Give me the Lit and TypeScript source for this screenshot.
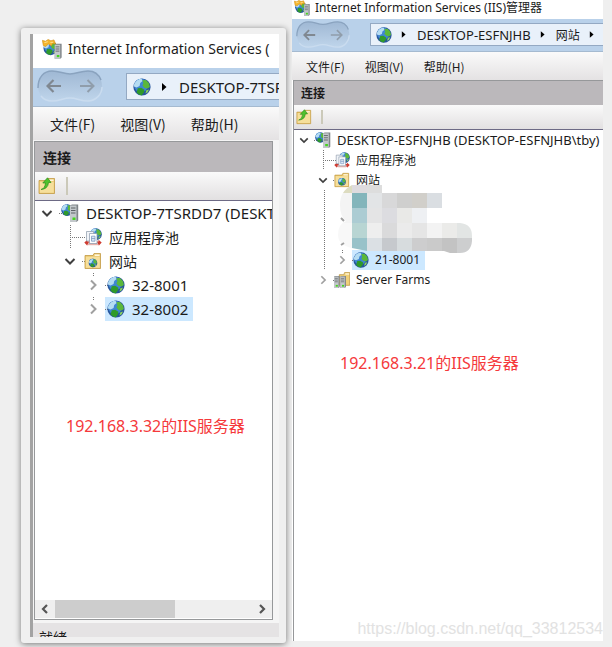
import { LitElement, html, svg, css, nothing } from "lit";
import { customElement, property } from "lit/decorators.js";
import { classMap } from "lit/directives/class-map.js";

type IconName = "server" | "globe" | "pool" | "sites" | "farm" | "connect" | "app" | "none";

interface TreeRow {
  level: number;
  icon: IconName;
  label: string;
  toggle?: "open" | "closed";
  cjk?: boolean;
  host?: boolean;
  selected?: boolean;
  guide?: boolean;
  dots?: boolean;
}

const globe = svg`
  <circle cx="9" cy="9" r="8.6" fill="#27559c"/>
  <circle cx="8" cy="7.500" r="6.800" fill="#3f86d2"/>
  <path d="M1.500 5.500Q4 .8 8.600 .8L9.600 3 7.200 5 6.600 8 3.600 9.400 1 8.400Q.8 6.500 1.500 5.500Z" fill="#b5dcf2"/>
  <path d="M9.400 2.200 13 2l3 3.200.9 3.800-2.300 1.600-3-.7-2.200-2.400 1-2.200Z" fill="#5bb83a"/>
  <path d="M4.800 10.200 8.200 9.800l3.200 2-.5 2.800-2.400 2.800Q5.600 17 3.600 14.600Z" fill="#2f9a2a"/>
  <path d="M13.400 12.200l2.600-.8-1.600 3.200-2 .8Z" fill="#8fd65c"/>`;

const folder = svg`
  <path d="M1 3.500h8l1-2h6.500v15H1Z" fill="#e8c468" stroke="#c39b45" stroke-width=".8"/>
  <path d="M1.800 4.600h14v11.200h-14Z" fill="#f6df9b"/>
  <path d="M10.600 2.400h5v1.600h-5Z" fill="#fff7da"/>`;

const tower = svg`
  <path d="M9 1.500 11 .5h6.200v16L15.500 18H9Z" fill="#7f8488"/>
  <path d="M9 1.500h6.500V18H9Z" fill="#c3c8cb"/>
  <path d="M10 4h4.500M10 6.500h4.500M10 9h4.500" stroke="#5d6265" stroke-width="1"/>
  <rect x="11.500" y="13.500" width="3" height="2.500" fill="#44d51d"/>`;

const icons: Record<IconName, unknown> = {
  none: nothing,
  globe,
  server: svg`<g transform="translate(0 0) scale(.68)">${globe}</g>${tower}`,
  app: svg`<g transform="translate(1 1.500) scale(.74)">${globe}</g>
    <path d="M.3 1.200 3.200 2 5.500.4 8 1.600 10.800.8 12.300 4.600 9.600 4 8.400 6.200 5.800 4.400 3.400 6.800 1.200 6Z" fill="#f5b52c" stroke="#cf8b16" stroke-width=".5"/>
    <path d="M2.200 3.200 5.200 2.500M7.500 3h2.500" stroke="#fde7a0" stroke-width=".8"/>
    <g transform="translate(4.600 4) scale(.76 .77)">${tower}</g>`,
  pool: svg`<g transform="translate(5.500 0) scale(.7)">${globe}</g>
    <path d="M.3 14.500 3.500 11.800v1.700h2v3h-2.200v1.200ZM17.700 14.500 14.500 11.800v1.700h-2v3h2.200v1.200Z" fill="#cf3b30"/>
    <path d="M4 14.600h10v2.600H4Z" fill="#e5b3ae"/>
    <path d="M2.500 3.500h7v9.500h-7Z" fill="#f1f4f8" stroke="#8b98a8" stroke-width=".7"/>
    <path d="M5.500 5.500h7.500v10H5.500Z" fill="#fff" stroke="#8796aa" stroke-width=".7"/>
    <path d="M7.500 8.200h3.500v5H7.500ZM7.500 10.500h3.500" fill="#dbe7f5" stroke="#7f9cc4" stroke-width=".8"/>`,
  sites: svg`${folder}<g transform="translate(4.500 6.500) scale(.5)">${globe}</g>`,
  farm: svg`<path d="M6 3h5l1-2.500h5.700V15H6Z" fill="#efd07a" stroke="#b98f38" stroke-width=".8"/>
    <path d="M12.800 1.500h4.200v1.500h-4.200Z" fill="#fff7da"/>
    <g transform="translate(-7 4) scale(.78)">${tower}</g>
    <g transform="translate(0 4) scale(.78)">${tower}</g>`,
  connect: svg`${folder}
    <path d="M3 12.500Q7 11.500 7.500 6H4.800L9.500.8 13 5.500h-2.500Q10 12 3 12.500Z" fill="#4fc22c" stroke="#2c8d1c" stroke-width=".7"/>`,
};

const icon = (name: IconName) =>
  html`<svg class="icon" viewBox="0 0 18 18" aria-hidden="true">${icons[name]}</svg>`;

const arrow = html`<svg class="crumb-arrow" viewBox="0 0 6 8" aria-hidden="true">
  <path d="M1 0 5.500 4 1 8Z" fill="#000" /></svg>`;

const chevron = (open: boolean) => html`<svg class="chevron" viewBox="0 0 12 12" aria-hidden="true">
  <path d=${open ? "M1.500 4 6 8.500 10.500 4" : "M4 1.500 8.500 6 4 10.500"} fill="none"
    stroke=${open ? "#404040" : "#a0a0a0"} stroke-width="2" /></svg>`;

const mosaicRows: [number, number, string[]][] = [
  [8, 15, ["#83b5bb", "#e2e4e6", "#d8d8d9", "#cfcfce", "#d1cfca", "#dadee2"]],
  [23, 15, ["#acccd3", "#e4e4e5", "#dcdce0", "#e9e9e7", "#eef0f3"]],
  [38, 15, ["#b8d5d3", "#eeeeee", "#dadadb", "#ebebeb", "#e5e5e5", "#f3f3f3", "#ebebe9", "#e2e5e4"]],
  [53, 15, ["#98c2c9", "#dbe0e4", "#c6c9cd", "#d7dcde", "#cdcdce", "#cacaca", "#c3c3c3", "#cdcecf"]],
];

const mosaic = html`<svg class="mosaic" viewBox="0 0 134 68" aria-hidden="true">
  <defs><clipPath id="brush">
    <path d="M14 0H44V8H104V23H89V38H122Q134 39 134 51V56Q133 68 122 68H112L106 66H29L14 63Q0 60 0 50 0 39 8 36 2 31 2 20 2 6 14 0Z" />
  </clipPath></defs>
  <g clip-path="url(#brush)">
    <rect x="0" y="8" width="14" height="30" fill="#f4f4f4" />
    <rect x="0" y="38" width="14" height="28" fill="#f8f8f8" />
    <rect x="2" y="0" width="12" height="8" fill="#dddcc0" />
    <rect x="14" y="0" width="15" height="8" fill="#dedbde" />
    <rect x="29" y="0" width="15" height="8" fill="#dddddd" />
    ${mosaicRows.map(([y, h, colors]) =>
      colors.map((c, i) => svg`<rect x=${14 + i * 15} y=${y} width="15" height=${h} fill=${c}/>`))}
  </g>
  <path d="M3 33l3 3M3 60l3-2" stroke="#a0a0a0" stroke-width="2" />
</svg>`;

@customElement("iis-window")
export class IisWindow extends LitElement {
  @property({ attribute: false }) caption: unknown = "";
  @property({ attribute: false }) crumbs: string[] = [];
  @property({ attribute: false }) rows: TreeRow[] = [];
  @property({ attribute: false }) note: unknown = "";
  @property({ type: Boolean }) footer = false;
  @property({ type: Boolean }) masked = false;
  @property({ type: Boolean }) trailing = false;

  static styles = css`
    :host {
      --text: 14px;
      --latin: 15px;
      --host: 15px;
      --icon: 18px;
      --indent: 23px;
      --cell: 24px;
      --row: 24px;
      display: flex;
      flex-direction: column;
      min-width: 0;
      overflow: hidden;
      background: #f5f5f5;
      color: #1b1b1b;
      font-family: "Noto Sans", "Noto Sans CJK SC", sans-serif;
      font-size: var(--latin);
    }
    :host([compact]) {
      --text: 12px;
      --latin: 12px;
      --host: 13px;
      --icon: 16px;
      --indent: 19px;
      --cell: 20px;
      --row: 20px;
    }
    * { box-sizing: border-box; }
    button {
      border: 0;
      padding: 0;
      background: none;
      color: inherit;
      font: inherit;
      white-space: nowrap;
    }
    .icon { width: var(--icon); height: var(--icon); flex: none; display: block; }
    .cjk { font-family: "Noto Sans CJK SC", sans-serif; font-size: var(--text); }
    .host { font-size: var(--host); }
    .title {
      display: flex;
      align-items: center;
      gap: 6px;
      height: 34px;
      padding: 0 0 4px 9px;
      background: #fff;
      white-space: nowrap;
      overflow: hidden;
      flex: none;
    }
    .title .icon { width: 20px; height: 20px; }
    .title-text { font-size: 14px; line-height: 24px; }
    :host([compact]) .title { height: 19px; padding: 0 0 4px 2px; gap: 5px; }
    :host([compact]) .title .icon { width: 16px; height: 16px; }
    :host([compact]) .title-text { font-size: 12px; line-height: 16px; }

    .address {
      display: flex;
      height: 39px;
      padding: 2px 0 0 4px;
      gap: 23px;
      background: #b9d1ea;
      border-bottom: 1px solid #a5bad0;
      flex: none;
    }
    .nav { position: relative; display: flex; width: 66px; height: 32px; flex: none; }
    .nav-shape { position: absolute; inset: 0; width: 100%; height: 100%; }
    .nav button { position: relative; flex: 1; display: grid; place-items: center; }
    .nav-arrow { width: 16px; height: 14px; }
    .path {
      display: flex;
      align-items: center;
      flex: 1;
      min-width: 0;
      height: 27px;
      margin-top: 3px;
      padding-left: 6px;
      background: #e9f1fa;
      border: 1px solid #94a9c3;
      border-right: 0;
      overflow: hidden;
      white-space: nowrap;
    }
    .crumb-arrow { width: 6px; height: 8px; flex: none; margin: 0 12px 0 10px; }
    :host([compact]) .address { height: 33px; gap: 20px; }
    :host([compact]) .nav { width: 54px; height: 27px; }
    :host([compact]) .nav-arrow { width: 13px; height: 12px; }
    :host([compact]) .path { height: 23px; margin-top: 2px; padding-left: 5px; }
    :host([compact]) .crumb-arrow { width: 5px; height: 7px; margin: 0 11px 0 9px; }

    .menu {
      display: flex;
      gap: 25px;
      height: 33px;
      padding-left: 17px;
      background: linear-gradient(#fafafa, #e4e2e3);
      flex: none;
    }
    :host([compact]) .menu { gap: 20px; height: 28px; padding-left: 14px; }

    .panel {
      display: flex;
      flex-direction: column;
      flex: 1;
      margin: 1px 6px 3px 1px;
      border: 1px solid #96989a;
      background: #fff;
      min-width: 0;
      overflow: hidden;
    }
    :host([compact]) .panel { margin: 0 0 0 1px; border-right: 0; border-bottom: 0; }
    .heading {
      margin: 0;
      height: 30px;
      padding-left: 8px;
      line-height: 30px;
      background: #bbb8bb;
      font-weight: 700;
      flex: none;
    }
    .tools {
      display: flex;
      align-items: center;
      gap: 10px;
      height: 29px;
      padding-left: 3px;
      background: linear-gradient(#fafafa, #e2e0e1);
      border-bottom: 1px solid #6d6a85;
      flex: none;
    }
    .divider { width: 2px; height: 18px; background: #cbc9b9; }
    :host([compact]) .heading { height: 24px; line-height: 24px; padding-left: 7px; }
    :host([compact]) .tools { height: 25px; padding-left: 2px; gap: 9px; }
    :host([compact]) .divider { height: 14px; }

    .tree { position: relative; margin: 0; padding: 0; list-style: none; flex: none; }
    .row { display: flex; height: var(--row); white-space: nowrap; }
    .guide { width: var(--indent); flex: none; }
    .guide.line {
      background: repeating-linear-gradient(#777 0 1px, transparent 1px 2px) 11px 0 / 1px 100% no-repeat;
    }
    .cell { width: var(--cell); flex: none; display: grid; place-items: center; }
    .cell.leaf {
      background:
        repeating-linear-gradient(#777 0 1px, transparent 1px 2px) center 0 / 1px 100% no-repeat,
        repeating-linear-gradient(90deg, #777 0 1px, transparent 1px 2px) right center / 50% 1px no-repeat;
    }
    .cell.dots {
      background: repeating-linear-gradient(#777 0 1px, transparent 1px 2px) center 0 / 1px 4px no-repeat;
    }
    .chevron { width: 12px; height: 12px; display: block; }
    .label {
      display: flex;
      align-items: center;
      gap: 7px;
      padding: 0 5px 0 2px;
      line-height: var(--row);
      background: repeating-linear-gradient(90deg, #777 0 1px, transparent 1px 2px) 0 center / 3px 1px no-repeat;
    }
    .label.selected { background-color: #cce8ff; }
    :host([compact]) .chevron { width: 10px; height: 10px; }
    :host([compact]) .label { gap: 6px; padding: 0 5px 0 1px; }

    .mosaic { position: absolute; left: 44px; top: 55px; width: 134px; height: 68px; }
    .note {
      margin: 93px 0 0 31px;
      font-size: 16px;
      line-height: 24px;
      color: #f5393b;
      white-space: nowrap;
    }
    :host([compact]) .note { margin: 61px 0 0 46px; }

    .scroll {
      display: flex;
      align-items: center;
      height: 18px;
      margin-top: auto;
      margin-bottom: 1px;
      background: #efefef;
      flex: none;
    }
    .scroll button { width: 20px; height: 18px; display: grid; place-items: center; }
    .track { flex: 1; height: 18px; }
    .thumb { width: 61%; height: 18px; background: #cdcdcd; }
    .status {
      height: 14px;
      padding: 4px 0 0 6px;
      overflow: hidden;
      background: #e5e3e4;
      line-height: 20px;
      flex: none;
    }
  `;

  private row(r: TreeRow) {
    const cell = { cell: true, leaf: r.level === 1 && !r.toggle, dots: !!r.dots };
    return html`<li class="row" role="treeitem" aria-selected=${r.selected ? "true" : "false"}>
      ${Array.from({ length: r.level }, (_, i) =>
        html`<span class=${classMap({ guide: true, line: i === 1 && !!r.guide })}></span>`)}
      ${r.toggle
        ? html`<button class=${classMap(cell)} aria-label="Toggle ${r.label}">${chevron(r.toggle === "open")}</button>`
        : html`<span class=${classMap(cell)}></span>`}
      ${r.icon === "none" ? nothing : html`<span class=${classMap({ label: true, selected: !!r.selected })}>
        ${icon(r.icon)}<span class=${classMap({ cjk: !!r.cjk, host: !!r.host })}>${r.label}</span></span>`}
    </li>`;
  }

  render() {
    return html`
      <header class="title">${icon("app")}<span class="title-text">${this.caption}</span></header>
      <nav class="address">
        <div class="nav">
          <svg class="nav-shape" viewBox="0 0 66 32" preserveAspectRatio="none" aria-hidden="true">
            <defs><linearGradient id="pill" x2="0" y2="1">
              <stop offset="0" stop-color="#9fb8d4" /><stop offset=".5" stop-color="#afc6df" />
              <stop offset="1" stop-color="#bfd5eb" />
            </linearGradient></defs>
            <path d="M15 1C23 1 26 4 33 4S43 1 51 1C60 1 65 8 65 16S60 31 51 31C43 31 40 28 33 28S23 31 15 31C6 31 1 24 1 16S6 1 15 1Z" fill="url(#pill)" />
            <path d="M1 18C1 7 7 1 15 1 23 1 26 4 33 4S43 1 51 1C58 1 62 5 64 10" fill="none" stroke="#8aa3bf" stroke-width="1.500" />
            <path d="M4 26C7 30 11 31 15 31 23 31 26 28 33 28S43 31 51 31C59 31 65 24 65 17" fill="none" stroke="#cadcef" stroke-width="1.500" />
          </svg>
          <button aria-label="Back"><svg class="nav-arrow" viewBox="0 0 16 14">
            <path d="M7.500 1 1.500 7l6 6M2 7h13" fill="none" stroke="#808891" stroke-width="2.200" /></svg></button>
          <button aria-label="Forward"><svg class="nav-arrow" viewBox="0 0 16 14">
            <path d="M8.500 1l6 6-6 6M14 7H1" fill="none" stroke="#909dab" stroke-width="2" /></svg></button>
        </div>
        <div class="path">
          ${icon("globe")}
          ${this.crumbs.map((c, i) => html`${arrow}<span class=${i === 0 ? "host" : "cjk"}>${c}</span>`)}
          ${this.trailing ? arrow : nothing}
        </div>
      </nav>
      <div class="menu cjk">
        <button>文件(F)</button><button>视图(V)</button><button>帮助(H)</button>
      </div>
      <section class="panel">
        <h2 class="heading cjk">连接</h2>
        <div class="tools"><button aria-label="Connect">${icon("connect")}</button><span class="divider"></span></div>
        <ul class="tree" role="tree">
          ${this.rows.map((r) => this.row(r))}
          ${this.masked ? mosaic : nothing}
        </ul>
        <p class="note">${this.note}</p>
        ${this.footer ? html`<div class="scroll">
          <button aria-label="Scroll left"><svg width="10" height="10" viewBox="0 0 10 10">
            <path d="M7 1 3 5l4 4" fill="none" stroke="#555" stroke-width="2.200" /></svg></button>
          <div class="track"><div class="thumb"></div></div>
          <button aria-label="Scroll right"><svg width="10" height="10" viewBox="0 0 10 10">
            <path d="M3 1l4 4-4 4" fill="none" stroke="#555" stroke-width="2.200" /></svg></button>
        </div>` : nothing}
      </section>
      ${this.footer ? html`<footer class="status cjk">就绪</footer>` : nothing}
    `;
  }
}

const leftRows: TreeRow[] = [
  { level: 0, icon: "server", label: "DESKTOP-7TSRDD7 (DESKT", toggle: "open", host: true },
  { level: 1, icon: "pool", label: "应用程序池", cjk: true },
  { level: 1, icon: "sites", label: "网站", toggle: "open", cjk: true },
  { level: 2, icon: "globe", label: "32-8001", toggle: "closed", dots: true },
  { level: 2, icon: "globe", label: "32-8002", toggle: "closed", dots: true, selected: true },
];

const rightRows: TreeRow[] = [
  { level: 0, icon: "server", label: "DESKTOP-ESFNJHB (DESKTOP-ESFNJHB\\tby)", toggle: "open", host: true },
  { level: 1, icon: "pool", label: "应用程序池", cjk: true },
  { level: 1, icon: "sites", label: "网站", toggle: "open", cjk: true },
  { level: 2, icon: "none", label: "", guide: true },
  { level: 2, icon: "none", label: "", guide: true },
  { level: 2, icon: "none", label: "", guide: true },
  { level: 2, icon: "globe", label: "21-8001", toggle: "closed", guide: true, dots: true, selected: true },
  { level: 1, icon: "farm", label: "Server Farms", toggle: "closed" },
];

@customElement("app-root")
export class AppRoot extends LitElement {
  static styles = css`
    :host {
      display: grid;
      grid-template-columns: 265fr 311fr;
      gap: 6px;
      min-height: 100vh;
      box-sizing: border-box;
      padding: 0 9px 0 21px;
      background: #efefef;
      overflow: hidden;
    }
    .frame {
      display: flex;
      min-width: 0;
      margin: 28px 0 4px;
      padding: 6px 7px 6px 9px;
      background: #f0f0f0;
      border-radius: 3px;
      box-shadow: 0 1px 6px rgba(0, 0, 0, 0.5);
    }
    .left { flex: 1; border-left: 3px solid #a3a3a3; }
    .side { position: relative; display: flex; min-width: 0; margin-bottom: 6px; }
    .right { flex: 1; background: #fff; }
    .mark {
      position: absolute;
      right: 0;
      bottom: 2px;
      font: 16px/20px "Liberation Sans", sans-serif;
      color: #e2e2e2;
      white-space: nowrap;
    }
  `;

  render() {
    return html`
      <div class="frame">
        <iis-window class="left" footer
          .caption=${"Internet Information Services ("}
          .crumbs=${["DESKTOP-7TSRDD7"]}
          .rows=${leftRows}
          .note=${"192.168.3.32的IIS服务器"}></iis-window>
      </div>
      <div class="side">
        <iis-window class="right" compact masked trailing
          .caption=${"Internet Information Services (IIS)管理器"}
          .crumbs=${["DESKTOP-ESFNJHB", "网站"]}
          .rows=${rightRows}
          .note=${"192.168.3.21的IIS服务器"}></iis-window>
        <span class="mark">https://blog.csdn.net/qq_33812534</span>
      </div>
    `;
  }
}
